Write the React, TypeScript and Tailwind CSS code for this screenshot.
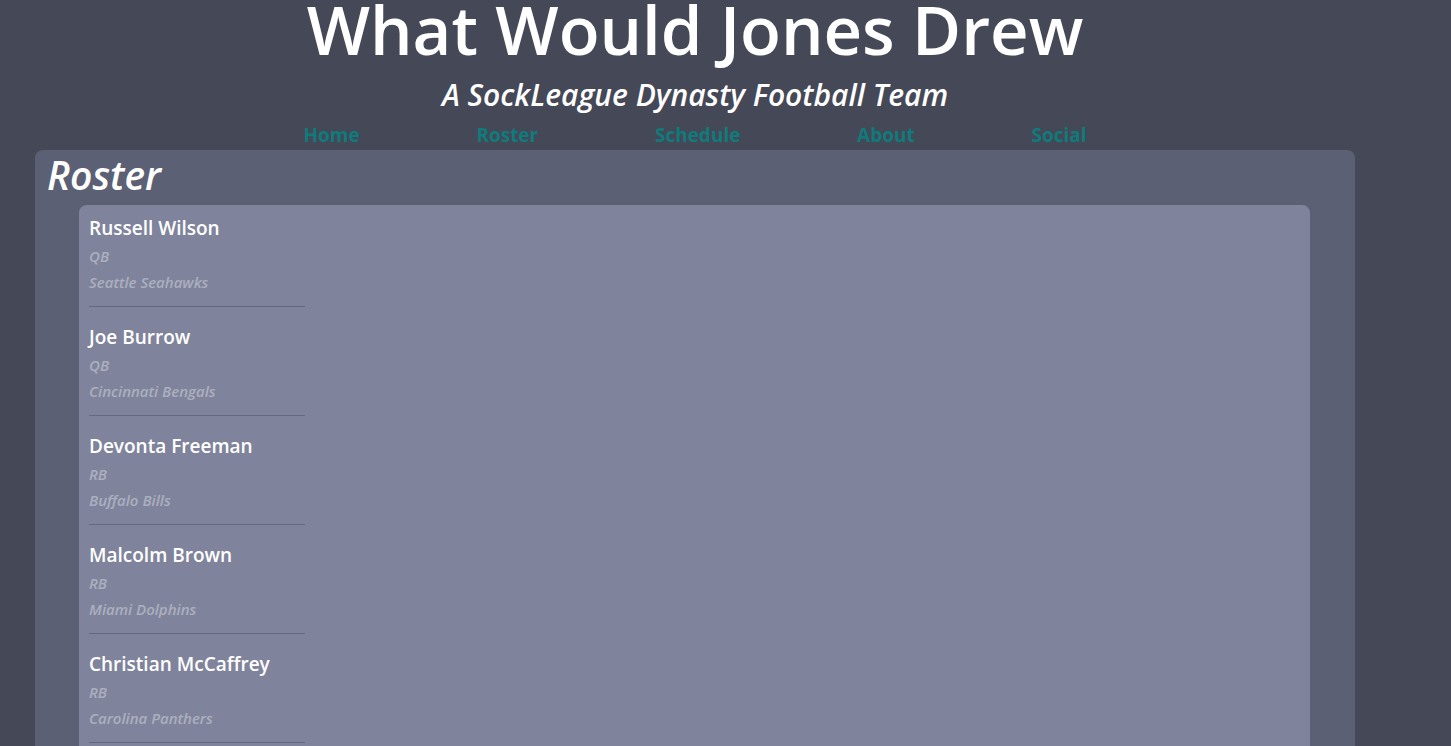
import React from "react";

type Player = { name: string; pos: string; team: string };

const roster: Player[] = [
  { name: "Russell Wilson", pos: "QB", team: "Seattle Seahawks" },
  { name: "Joe Burrow", pos: "QB", team: "Cincinnati Bengals" },
  { name: "Devonta Freeman", pos: "RB", team: "Buffalo Bills" },
  { name: "Malcolm Brown", pos: "RB", team: "Miami Dolphins" },
  { name: "Christian McCaffrey", pos: "RB", team: "Carolina Panthers" },
  { name: "Tony Pollard", pos: "RB", team: "Dallas Cowboys" },
];

const links = ["Home", "Roster", "Schedule", "About", "Social"];

export default function App() {
  return (
    <div
      className="h-[746px] overflow-hidden bg-[#444857] text-white"
      style={{ fontFamily: '"Open Sans", "Noto Sans", sans-serif' }}
    >
      <div className="w-[1320px] ml-[35px] flex flex-col">
        {/* Cabecera */}
        <header className="flex flex-col items-center">
          <h1 className="text-[67px] leading-[66px] font-semibold mt-[-4px]">
            What Would Jones Drew
          </h1>
          <h2 className="text-[30px] leading-[36px] italic font-semibold mt-[15px]">
            A SockLeague Dynasty Football Team
          </h2>
          <nav className="w-[783px] flex justify-between mt-[9px]">
            {links.map((l) => (
              <a key={l} className="text-[19px] leading-[26px] font-bold text-[#0f7b7b]">
                {l}
              </a>
            ))}
          </nav>
        </header>

        {/* Panel del roster */}
        <section className="mt-[2px] bg-[#5b6074] rounded-lg pl-[12px] pt-[1px] h-[620px]">
          <h3 className="text-[39px] leading-[48px] italic font-semibold">Roster</h3>
          <div className="ml-[32px] mr-[45px] mt-[6px] bg-[#7f849c] rounded-lg pl-[10px] h-[600px]">
            {roster.map((p) => (
              <div key={p.name} className="w-[216px] border-b border-[#64697f] h-[102px] mb-[7px] pt-[10px] flex flex-col">
                <div className="text-[19px] leading-[26px] font-semibold">{p.name}</div>
                <div className="text-[15px] leading-[18px] italic font-semibold text-[#acafbf] mt-[6px]">{p.pos}</div>
                <div className="text-[15px] leading-[18px] italic font-semibold text-[#acafbf] mt-[8px]">{p.team}</div>
              </div>
            ))}
          </div>
        </section>
      </div>
    </div>
  );
}
